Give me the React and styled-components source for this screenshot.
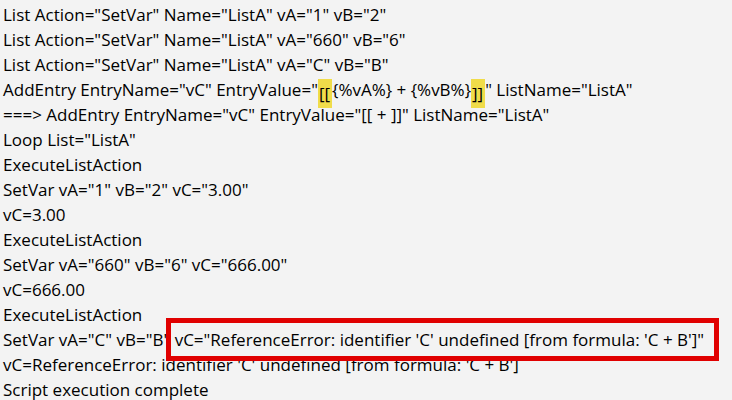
import styled, { createGlobalStyle } from "styled-components";

const lines = [
  'List Action="SetVar" Name="ListA" vA="1" vB="2"',
  'List Action="SetVar" Name="ListA" vA="660" vB="6"',
  'List Action="SetVar" Name="ListA" vA="C" vB="B"',
  "ENTRY",
  '===> AddEntry EntryName="vC" EntryValue="[[ + ]]" ListName="ListA"',
  'Loop List="ListA"',
  "ExecuteListAction",
  'SetVar vA="1" vB="2" vC="3.00"',
  "vC=3.00",
  "ExecuteListAction",
  'SetVar vA="660" vB="6" vC="666.00"',
  "vC=666.00",
  "ExecuteListAction",
  "ERROR",
  "vC=ReferenceError: identifier 'C' undefined [from formula: 'C + B']",
  "Script execution complete",
];

export default function App() {
  return (
    <>
      <GlobalStyle />
      <Log>
        {lines.map((line, i) => {
          if (line === "ENTRY") {
            return (
              <Line key={i}>
                AddEntry EntryName="vC" EntryValue="<Mark>[[</Mark>
                {"{%vA%} + {%vB%}"}
                <Mark>]]</Mark>" ListName="ListA"
              </Line>
            );
          }
          if (line === "ERROR") {
            return (
              <Line key={i}>
                SetVar vA="C" vB="B"
                <Boxed>
                  {" "}
                  vC="ReferenceError: identifier 'C' undefined [from formula: 'C + B']"
                </Boxed>
              </Line>
            );
          }
          return <Line key={i}>{line}</Line>;
        })}
      </Log>
    </>
  );
}

const GlobalStyle = createGlobalStyle`
  html, body {
    margin: 0;
    background: #f3f3f3;
  }
`;

const Log = styled.div`
  padding: 2px 0 0 3px;
  font-family: "Open Sans", "Noto Sans", sans-serif;
  font-size: 17px;
  line-height: 25px;
  color: #000;
  white-space: pre;
`;

const Line = styled.div`
  height: 25px;
`;

const Mark = styled.span`
  display: inline-block;
  line-height: 29px;
  height: 29px;
  padding: 0 2px 0 1px;
  vertical-align: -4px;
  background: #f0dc4a;
`;

const Boxed = styled.span`
  position: relative;
  &::after {
    content: "";
    position: absolute;
    left: -4px;
    right: -15px;
    top: -10px;
    bottom: -10px;
    border: 5px solid #e00000;
  }
`;
